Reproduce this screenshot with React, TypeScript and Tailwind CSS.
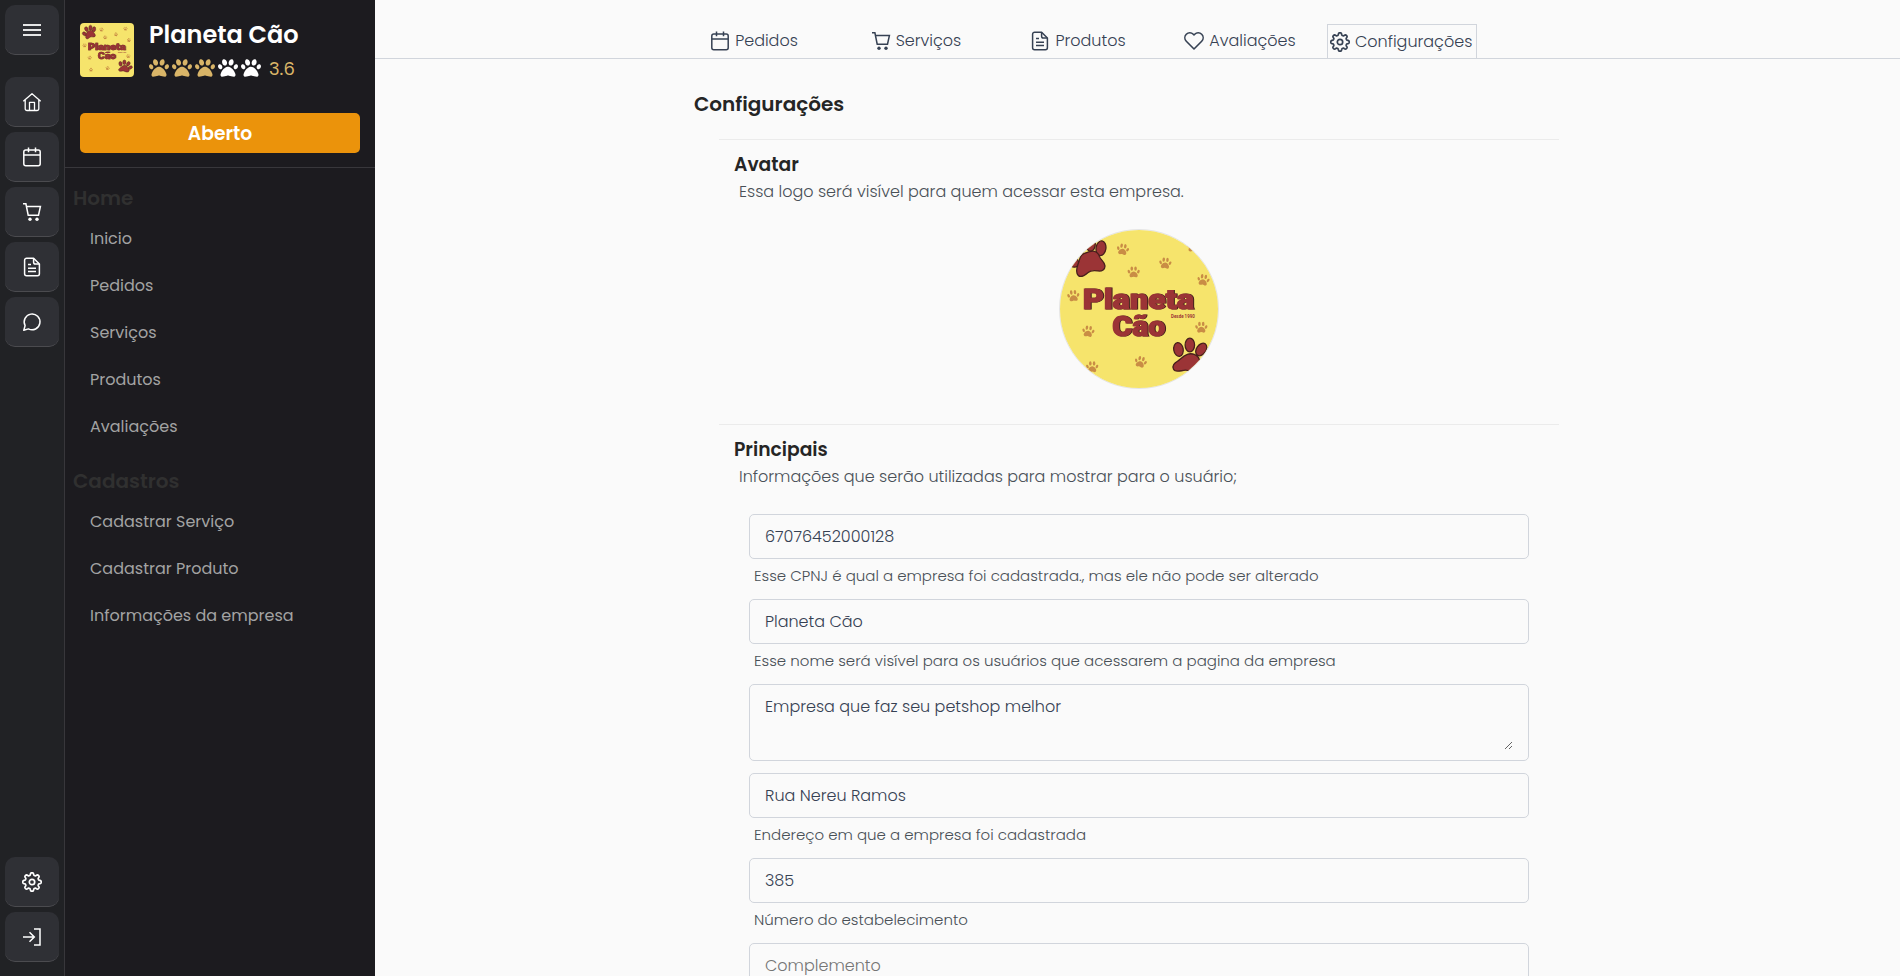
import React from 'react';
import { FaPaw } from 'react-icons/fa6';

type IconProps = { className?: string };

function Svg({ w = 20, h = 20, className = '', children }: { w?: number; h?: number; className?: string; children: React.ReactNode }) {
  return (
    <svg width={w} height={h} viewBox={`0 0 ${w} ${h}`} fill="none" stroke="currentColor" strokeWidth={1.5} strokeLinejoin="round" className={`shrink-0 ${className}`}>
      {children}
    </svg>
  );
}

const MenuIcon = () => (
  <Svg>
    <path d="M1 5h18M1 10h18M1 15h18" strokeWidth={2} opacity={0.88} />
  </Svg>
);
const HomeIcon = () => (
  <Svg>
    <path d="M1.3 9.2 10 1.7l8.7 7.5M3.2 8v8.7a1.8 1.8 0 0 0 1.8 1.8h10a1.8 1.8 0 0 0 1.8-1.8V8M7.5 18.3v-8h5v8" strokeWidth={1.3} />
  </Svg>
);
const CalendarIcon = ({ className }: IconProps) => (
  <Svg className={className}>
    <rect x="1.8" y="3" width="16.4" height="15.8" rx="2" />
    <path d="M2 8h16M6.5.6v4.6M13.5.6v4.6" />
  </Svg>
);
const CartIcon = ({ className }: IconProps) => (
  <Svg className={className}>
    <path d="M1 1.8h2.9l2.3 11.4h10.3l1.9-8.6H4.5" strokeLinejoin="miter" />
    <circle cx="8" cy="17.2" r="1.7" fill="currentColor" stroke="none" />
    <circle cx="15" cy="17.2" r="1.7" fill="currentColor" stroke="none" />
  </Svg>
);
const FileIcon = ({ className }: IconProps) => (
  <Svg className={className}>
    <path d="M11.6 1.2H4.6a2 2 0 0 0-2 2v13.6a2 2 0 0 0 2 2h10.8a2 2 0 0 0 2-2V7z" />
    <path d="M11.6 1.4V5.2a1.8 1.8 0 0 0 1.8 1.8h3.8M6 7.5h3M6 11.2h8M6 14.5h8" />
  </Svg>
);
const ChatIcon = () => (
  <Svg>
    <path d="M1.8 18.2 3.1 13.6A7.9 7.9 0 1 1 6.4 16.9z" />
  </Svg>
);
const HeartIcon = ({ className }: IconProps) => (
  <Svg className={className}>
    <path d="M10 18 2.3 10.3A5 5 0 0 1 2.3 3.3 5 5 0 0 1 9.3 3.3L10 4l.7-.7a5 5 0 0 1 7 0 5 5 0 0 1 0 7z" strokeWidth={1.6} />
  </Svg>
);
const gearPath =
  Array.from({ length: 160 }, (_, i) => {
    const t = (i / 160) * Math.PI * 2;
    const r = 8.05 + 1.15 * Math.tanh(2.2 * Math.cos(8 * t));
    return `${i ? 'L' : 'M'}${(10 + r * Math.cos(t)).toFixed(2)} ${(10 + r * Math.sin(t)).toFixed(2)}`;
  }).join('') + 'Z';
const GearIcon = ({ className }: IconProps) => (
  <Svg className={className}>
    <path d={gearPath} strokeWidth={1.7} />
    <circle cx="10" cy="10" r="2.7" strokeWidth={1.7} />
  </Svg>
);
const EnterIcon = () => (
  <Svg>
    <path d="M12 2h6v16h-6M1 10h11.5M7.5 5.2l4.8 4.8-4.8 4.8" strokeLinejoin="miter" />
  </Svg>
);

const smallPaws: [number, number, number][] = [
  [63, 20, 10], [106, 34, 5], [74, 43, 0], [144.5, 51, 10], [13, 67, -5],
  [28, 103, 8], [142.5, 99, 0], [81, 134, 15], [32, 139, 0], [134, 17, 5],
];

function Logo({ className = '' }: IconProps) {
  return (
    <svg viewBox="0 0 160 160" className={className}>
      <rect width="160" height="160" fill="#f6e46c" />
      {smallPaws.map(([x, y, r]) => (
        <g key={`${x}-${y}`} transform={`translate(${x + 0.6} ${y}) rotate(${r})`} fill="#c98d45">
          <path d="M0-1c2.5 0 5.5 4 3.5 5.6C2.2 5.5 1 4.3 0 4.3S-2.2 5.5-3.5 4.6C-5.5 3-2.5-1 0-1z" />
          <ellipse cx="-4.8" cy="-.8" rx="1.2" ry="1.9" transform="rotate(-25 -4.8 -.8)" />
          <ellipse cx="-1.9" cy="-3.9" rx="1.3" ry="2.2" />
          <ellipse cx="1.9" cy="-3.9" rx="1.3" ry="2.2" />
          <ellipse cx="4.8" cy="-.8" rx="1.2" ry="1.9" transform="rotate(25 4.8 -.8)" />
        </g>
      ))}
      <g fill="#9b3436" stroke="#48201c" strokeWidth="1.3">
        <ellipse cx="13" cy="32" rx="5" ry="6.5" transform="rotate(-50 13 32)" />
        <ellipse cx="19" cy="18" rx="5" ry="7" transform="rotate(-25 19 18)" />
        <ellipse cx="31" cy="14" rx="4.8" ry="7.5" />
        <ellipse cx="41.5" cy="18.5" rx="5" ry="7.5" transform="rotate(8 41.5 18.5)" />
        <path d="M30 22c5-2 9 1 10 5 1 3 5 5 5.5 9s-3 6-7 5.5-7-1-10 1.500-7 6-10 3-1.500-8 0-12 1-5 3-8 5-3 8.500-4z" />
        <ellipse cx="120" cy="121" rx="4.8" ry="7" transform="rotate(-10 120 121)" />
        <ellipse cx="131.5" cy="116.5" rx="4.8" ry="7" />
        <ellipse cx="143" cy="121" rx="4.8" ry="7" transform="rotate(35 143 121)" />
        <ellipse cx="149" cy="132" rx="4.5" ry="6.5" transform="rotate(65 149 132)" />
        <path d="M129 126c5-2 11 1 12 5s5 4 5 9-5 6-9 5-6-3-10-3-10 3-12-1 1-6 4-8 5-5 10-7z" />
      </g>
      <g className="font-['Roboto','Liberation_Sans',sans-serif]" fontWeight="900" fill="#9b3436">
        <g stroke="#9b3436" strokeWidth="1.2" className="[filter:drop-shadow(1.4px_0.3px_0_#3d1f1a)]">
          <text x="23" y="79.5" fontSize="27.5" textLength="112.5" lengthAdjust="spacingAndGlyphs">Planeta</text>
          <text x="53" y="107.5" fontSize="27.5" textLength="53.5" lengthAdjust="spacingAndGlyphs">Cão</text>
        </g>
        <text x="112.5" y="89.5" fontSize="5.4" fontWeight="700" textLength="24" lengthAdjust="spacingAndGlyphs">Desde 1990</text>
      </g>
    </svg>
  );
}

function RailButton({ children }: { children: React.ReactNode }) {
  return (
    <button className="flex h-[50px] w-[54px] items-center justify-center rounded-[10px] border-b border-[#4b4b4f] bg-[#2f3035] text-white">
      {children}
    </button>
  );
}

function MenuGroup({ title, items }: { title: string; items: string[] }) {
  return (
    <section>
      <h2 className="px-2 text-xl font-semibold leading-[30px] text-[#303030]">{title}</h2>
      <ul className="mt-[1px]">
        {items.map((i) => (
          <li key={i} className="flex h-[47px] items-center pl-[25px] pt-[2px] text-base text-[#a3a3a3]">{i}</li>
        ))}
      </ul>
    </section>
  );
}

const fieldClass = 'block w-full rounded-[5px] border border-gray-300 bg-transparent px-[15px] text-base font-light text-gray-700 outline-none placeholder:text-[#757575]';

function Field({ value, placeholder, help }: { value?: string; placeholder?: string; help?: string }) {
  return (
    <div className="h-[85px]">
      <input className={`${fieldClass} h-[45px]`} defaultValue={value} placeholder={placeholder} />
      {help && <p className="pl-[5px] pt-[5px] text-[15px] font-light leading-6 text-[#495057]">{help}</p>}
    </div>
  );
}

function SectionHead({ title, text }: { title: string; text: string }) {
  return (
    <div className="pl-[15px]">
      <h2 className="text-[18.72px] font-semibold leading-[27px] text-[#252525]">{title}</h2>
      <p className="pl-[5px] text-base font-light leading-[27px] text-[#495057]">{text}</p>
    </div>
  );
}

const tabs = [
  { label: 'Pedidos', Icon: CalendarIcon },
  { label: 'Serviços', Icon: CartIcon },
  { label: 'Produtos', Icon: FileIcon },
  { label: 'Avaliações', Icon: HeartIcon },
];

export default function App() {
  return (
    <div className="flex h-[976px] w-full overflow-hidden bg-[#fafafa] font-['Poppins','Inter',sans-serif]">
      <nav className="flex w-[65px] shrink-0 flex-col gap-[5px] border-r border-[#38373b] bg-[#212225] px-[5px] pb-[14px] pt-[5px]">
        <div className="mb-[17px]"><RailButton><MenuIcon /></RailButton></div>
        <RailButton><HomeIcon /></RailButton>
        <RailButton><CalendarIcon /></RailButton>
        <RailButton><CartIcon /></RailButton>
        <RailButton><FileIcon /></RailButton>
        <RailButton><ChatIcon /></RailButton>
        <div className="flex-1" />
        <RailButton><GearIcon /></RailButton>
        <RailButton><EnterIcon /></RailButton>
      </nav>

      <aside className="w-[310px] shrink-0 bg-[#1c1b1f]">
        <header className="h-[168px] border-b border-[#38373b] px-[15px] pt-[17px]">
          <div className="flex gap-[15px]">
            <Logo className="mt-[6px] size-[54px] rounded-[4px]" />
            <div>
              <h1 className="text-2xl font-semibold leading-9 text-white">Planeta Cão</h1>
              <div className="flex items-center gap-[3px] leading-[30px]">
                {[0, 1, 2, 3, 4].map((i) => (
                  <FaPaw key={i} size={20} className={i < 3 ? 'text-[#d9b568]' : 'text-white'} />
                ))}
                <span className="ml-[5px] pt-px text-lg leading-[29px] text-[#d9b568]">3.6</span>
              </div>
            </div>
          </div>
          <button className="mt-[30px] h-10 w-full rounded-[5px] bg-[#eb930b] pt-[2px] text-[18.72px] font-semibold text-white">Aberto</button>
        </header>
        <div className="flex flex-col gap-[17px] pt-[15px]">
          <MenuGroup title="Home" items={['Inicio', 'Pedidos', 'Serviços', 'Produtos', 'Avaliações']} />
          <MenuGroup title="Cadastros" items={['Cadastrar Serviço', 'Cadastrar Produto', 'Informações da empresa']} />
        </div>
      </aside>

      <main className="min-w-0 flex-1">
        <div className="flex h-[59px] items-end border-b border-gray-300 pl-[298px]">
          {tabs.map(({ label, Icon }) => (
            <div key={label} className="flex h-[34px] w-[162px] items-center justify-center gap-[5px] text-base font-light text-gray-700">
              <Icon />
              <span>{label}</span>
            </div>
          ))}
          <div className="ml-[6px] flex h-[34px] w-[150px] items-center gap-[5px] border border-b-0 border-gray-300 pl-[2px] text-base font-light text-gray-700">
            <GearIcon />
            <span>Configurações</span>
          </div>
        </div>

        <div className="pl-[319px] pr-[341px] pt-[30px]">
          <h1 className="text-xl font-semibold leading-[30px] text-[#252525]">Configurações</h1>
        </div>
        <section className="ml-[344px] mt-5 w-[840px] border-t border-[#ebebeb] pt-[11px]">
          <SectionHead title="Avatar" text="Essa logo será visível para quem acessar esta empresa." />
          <div className="mt-[24px] flex justify-center">
            <Logo className="size-[160px] rounded-full border border-[#e5e5e5]" />
          </div>
        </section>
        <section className="ml-[344px] mt-[35px] w-[840px] border-t border-[#ebebeb] pt-[11px]">
          <SectionHead title="Principais" text="Informações que serão utilizadas para mostrar para o usuário;" />
          <div className="ml-[30px] mt-[24px] w-[780px]">
            <Field value="67076452000128" help="Esse CPNJ é qual a empresa foi cadastrada., mas ele não pode ser alterado" />
            <Field value="Planeta Cão" help="Esse nome será visível para os usuários que acessarem a pagina da empresa" />
            <div className="mb-3 flex h-[77px] w-full rounded-[5px] border border-gray-300 px-[15px] py-[10px]">
              <textarea className="h-full w-full resize bg-transparent text-base font-light text-gray-700 outline-none" defaultValue="Empresa que faz seu petshop melhor" />
            </div>
            <Field value="Rua Nereu Ramos" help="Endereço em que a empresa foi cadastrada" />
            <Field value="385" help="Número do estabelecimento" />
            <Field placeholder="Complemento" />
          </div>
        </section>
      </main>
    </div>
  );
}
